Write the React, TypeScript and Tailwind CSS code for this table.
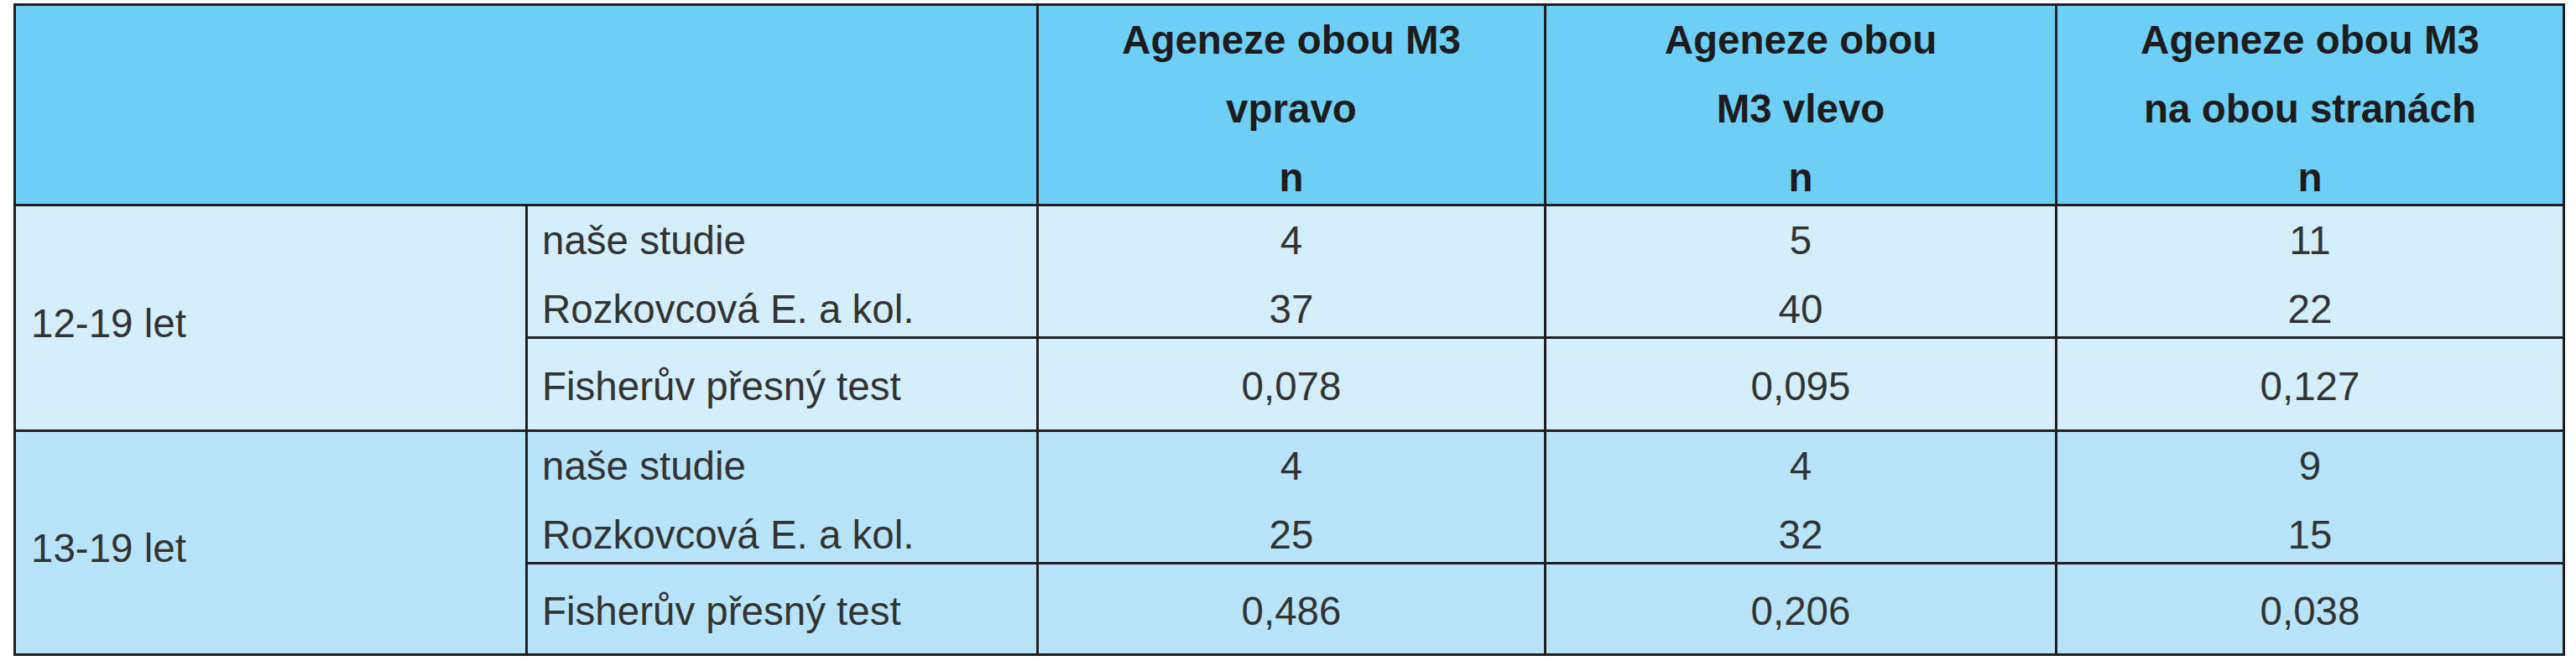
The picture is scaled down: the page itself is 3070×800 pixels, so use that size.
import React from "react";

const groups = [
  {
    label: "12-19 let",
    bg: "bg-[#d4eefb]",
    a: [
      ["4", "37"],
      ["5", "40"],
      ["11", "22"],
    ],
    p: ["0,078", "0,095", "0,127"],
  },
  {
    label: "13-19 let",
    bg: "bg-[#b8e4f9]",
    a: [
      ["4", "25"],
      ["4", "32"],
      ["9", "15"],
    ],
    p: ["0,486", "0,206", "0,038"],
  },
];

const headers = [
  ["Ageneze obou M3", "vpravo", "n"],
  ["Ageneze obou", "M3 vlevo", "n"],
  ["Ageneze obou M3", "na obou stranách", "n"],
];

export default function App() {
  return (
    <div
      className="w-[3070px] h-[800px] bg-white pt-[4px] pl-[16px]"
      style={{ fontFamily: '"Liberation Sans", Arial, sans-serif' }}
    >
      <div className="grid w-fit grid-cols-[607px_606px_602px_606px_602px] grid-rows-[236px_155px_108px_155px_106px] gap-[3px] p-[3px] bg-[#231f20] text-[47.5px] leading-[82px]">
        <div className="col-span-2 bg-[#6dcff6]" />
        {headers.map((h, i) => (
          <div
            key={i}
            className="bg-[#6dcff6] overflow-hidden text-center font-bold text-[#1e1b1c]"
          >
            {h.map((line, j) => (
              <div key={j}>{line}</div>
            ))}
          </div>
        ))}
        {groups.map((g, gi) => (
          <React.Fragment key={gi}>
            <div
              className={`${g.bg} row-span-2 flex items-center pl-[18px] pt-[14px] text-[#333333]`}
            >
              {g.label}
            </div>
            <div className={`${g.bg} pl-[17px] text-[#333333]`}>
              <div>naše studie</div>
              <div>Rozkovcová E. a kol.</div>
            </div>
            {g.a.map((vals, vi) => (
              <div key={vi} className={`${g.bg} text-center text-[#333333]`}>
                <div>{vals[0]}</div>
                <div>{vals[1]}</div>
              </div>
            ))}
            <div
              className={`${g.bg} flex items-center pl-[17px] pt-[6px] text-[#333333]`}
            >
              Fisherův přesný test
            </div>
            {g.p.map((v, vi) => (
              <div
                key={vi}
                className={`${g.bg} flex items-center justify-center pt-[6px] text-[#333333]`}
              >
                {v}
              </div>
            ))}
          </React.Fragment>
        ))}
      </div>
    </div>
  );
}
